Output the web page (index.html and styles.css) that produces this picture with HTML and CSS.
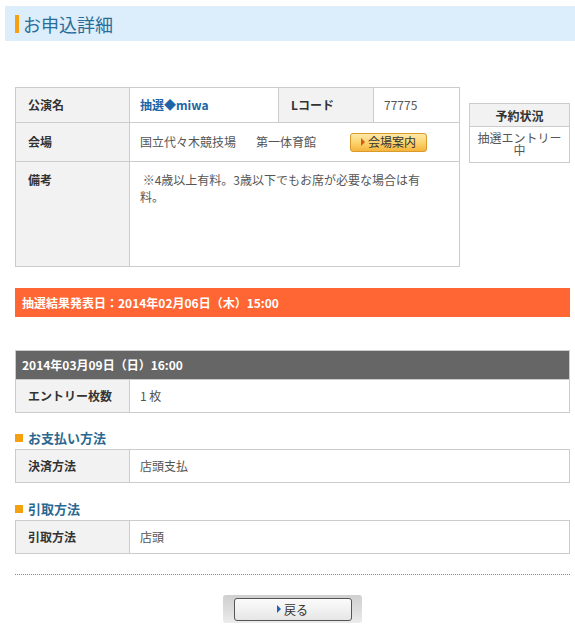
FILE: index.html
```html
<!DOCTYPE html>
<html lang="ja">
<head>
<meta charset="utf-8">
<title>お申込詳細</title>
<link rel="stylesheet" href="styles.css">
</head>
<body>
<div class="page">
  <h1 class="title"><span class="title-mark"></span>お申込詳細</h1>
  <div class="content">
    <div class="top">
      <table class="info">
        <colgroup>
          <col class="c1"><col class="c2"><col class="c3"><col class="c4">
        </colgroup>
        <tr class="r1">
          <th>公演名</th>
          <td class="name">抽選◆miwa</td>
          <th>Lコード</th>
          <td>77775</td>
        </tr>
        <tr class="r2">
          <th>会場</th>
          <td colspan="3">
            <div class="venue">
              <span>国立代々木競技場<span class="gap"></span>第一体育館</span>
              <span class="venue-btn"><span class="tri tri-orange"></span>会場案内</span>
            </div>
          </td>
        </tr>
        <tr class="r3">
          <th>備考</th>
          <td colspan="3" class="note">&nbsp;※4歳以上有料。3歳以下でもお席が必要な場合は有<br>料。</td>
        </tr>
      </table>
      <div class="status">
        <div class="status-head">予約状況</div>
        <div class="status-body">抽選エントリー中</div>
      </div>
    </div>

    <div class="notice">抽選結果発表日：2014年02月06日（木）15:00</div>

    <table class="grid perf">
      <colgroup><col class="lab"><col></colgroup>
      <tr class="perf-head"><td colspan="2">2014年03月09日（日）16:00</td></tr>
      <tr class="row"><th>エントリー枚数</th><td>1 枚</td></tr>
    </table>

    <h2 class="sec"><span class="sec-mark"></span>お支払い方法</h2>
    <table class="grid">
      <colgroup><col class="lab"><col></colgroup>
      <tr class="row"><th>決済方法</th><td>店頭支払</td></tr>
    </table>

    <h2 class="sec sec2"><span class="sec-mark"></span>引取方法</h2>
    <table class="grid">
      <colgroup><col class="lab"><col></colgroup>
      <tr class="row"><th>引取方法</th><td>店頭</td></tr>
    </table>

    <div class="divider"></div>

    <div class="actions">
      <div class="back-wrap">
        <button class="back-btn" type="button"><span class="tri tri-blue"></span>戻る</button>
      </div>
    </div>
  </div>
</div>
</body>
</html>
```

FILE: styles.css
```css
* { box-sizing: border-box; }

html, body {
  margin: 0;
  padding: 0;
  background: #fff;
}

body {
  font-family: "Noto Sans CJK JP", "Noto Sans", "Liberation Sans", sans-serif;
  font-size: 12px;
  color: #555;
}

.page {
  padding: 6px 0 0 5px;
}

.title {
  margin: 0;
  height: 35px;
  background: #dcedfb;
  display: flex;
  align-items: center;
  padding-left: 10px;
  font-size: 18px;
  font-weight: normal;
  color: #2a6d98;
  line-height: 1;
}

.title-mark {
  display: inline-block;
  width: 4px;
  height: 18px;
  background: #f5a00f;
  margin-right: 4px;
}

.content {
  margin: 0 5px 0 10px;
}

.top {
  display: flex;
  align-items: flex-start;
  margin-top: 46px;
}

table {
  border-collapse: collapse;
}

th, td {
  border: 1px solid #cccccc;
  text-align: left;
  font-size: 12px;
  line-height: 14px;
}

th {
  background: #f2f2f2;
  color: #333;
  font-weight: bold;
  padding: 0 12px;
}

td {
  background: #fff;
  color: #555;
  padding: 0 10px;
}

.info {
  width: 444px;
  table-layout: fixed;
}

.info .c1 { width: 114px; }
.info .c2 { width: 149px; }
.info .c3 { width: 95px; }
.info .c4 { width: 86px; }

.info .r1 { height: 35px; }
.info .r2 { height: 39px; }
.info .r3 { height: 105px; }
.info .r3 th {
  vertical-align: top;
  padding-top: 11px;
}
.info .r3 td {
  vertical-align: top;
  padding-top: 9px;
}

.info .note {
  line-height: 17px;
}

.info .name {
  color: #1d65a6;
  font-weight: bold;
}

.venue {
  display: flex;
  align-items: center;
}

.gap {
  display: inline-block;
  width: 20px;
}

.venue-btn {
  margin-left: 34px;
  display: inline-flex;
  align-items: center;
  justify-content: center;
  width: 77px;
  height: 19px;
  border: 1px solid #d99a2e;
  border-radius: 3px;
  background: linear-gradient(#fee9a8, #fbd16a 55%, #f6b43c);
  color: #333;
  font-size: 12px;
}

.tri {
  display: inline-block;
  width: 0;
  height: 0;
  border-top: 4px solid transparent;
  border-bottom: 4px solid transparent;
  border-left: 4px solid #d35400;
  margin-right: 3px;
}

.tri-orange { border-left-color: #d65a10; }
.tri-blue { border-left-color: #1f64b0; }

.status {
  margin-left: 9px;
  margin-top: 16px;
  width: 101px;
  border: 1px solid #ccc;
  text-align: center;
}

.status-head {
  height: 23px;
  line-height: 23px;
  background: #f2f2f2;
  color: #333;
  font-weight: bold;
  border-bottom: 1px solid #ccc;
}

.status-body {
  padding: 5px 6px 6px;
  line-height: 12px;
  color: #555;
}

.notice {
  margin-top: 21px;
  height: 29px;
  line-height: 29px;
  padding-left: 7px;
  background: #ff6633;
  color: #fff;
  font-weight: bold;
}

.grid {
  width: 100%;
  table-layout: fixed;
}

.grid .lab { width: 114px; }

.perf {
  margin-top: 33px;
}

.perf-head td {
  height: 29px;
  background: #666;
  color: #fff;
  font-weight: bold;
  padding-left: 6px;
}

.row { height: 33px; }

.sec {
  margin: 17px 0 3px;
  display: flex;
  align-items: center;
  font-size: 13px;
  line-height: 16px;
  font-weight: bold;
  color: #2a6890;
}

.sec2 { margin-top: 18px; }

.sec-mark {
  display: inline-block;
  width: 8px;
  height: 8px;
  background: #f5a00f;
  margin-right: 5px;
}

.divider {
  margin-top: 20px;
  border-top: 1px dotted #888;
}

.actions {
  display: flex;
  justify-content: center;
  margin-top: 20px;
}

.back-wrap {
  width: 139px;
  height: 28px;
  border-radius: 3px;
  background: linear-gradient(#cfcfcf, #dcdcdc 50%, #ececec);
  display: flex;
  align-items: center;
  justify-content: center;
}

.back-btn {
  width: 118px;
  height: 23px;
  border: 1px solid #555;
  border-radius: 3px;
  background: linear-gradient(#fbfbfb, #f1f1f1 50%, #e6e6e6);
  font-family: inherit;
  font-size: 12px;
  color: #333;
  display: flex;
  align-items: center;
  justify-content: center;
  padding: 0;
}
```
